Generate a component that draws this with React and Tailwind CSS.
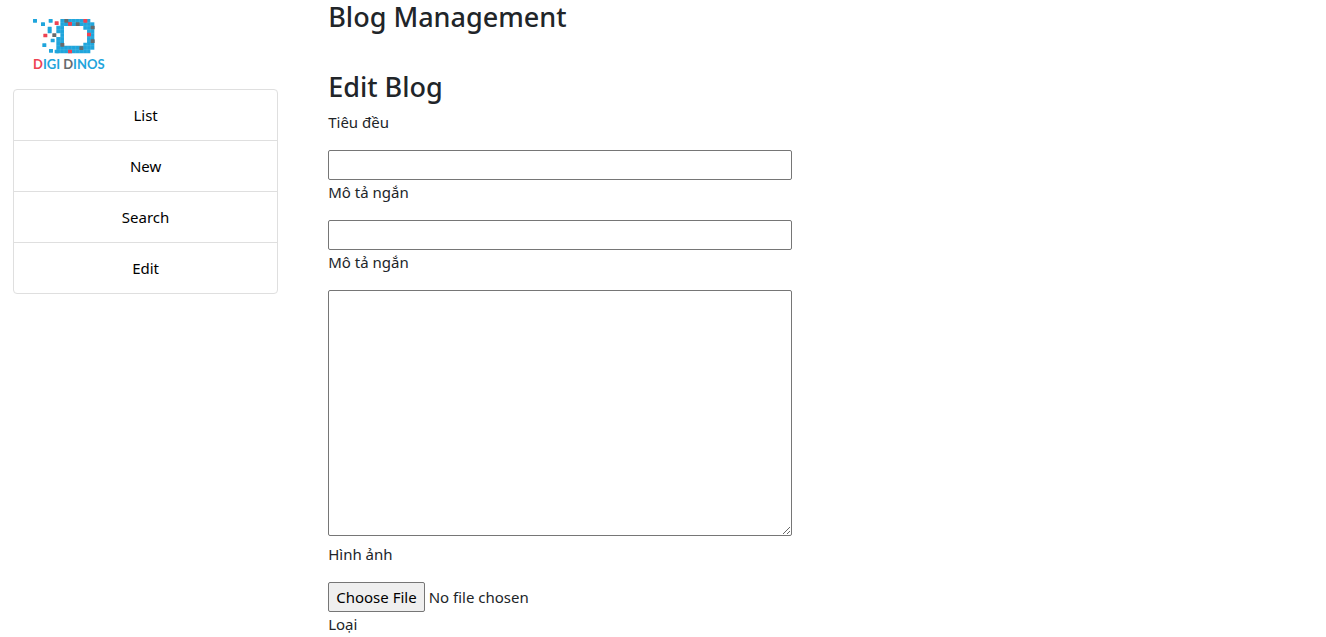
const BLUE = '#1fa5dc';
const RED = '#ee4352';
const GRAY = '#666a6d';

const scattered = [
  [39, 33], [63, 43], [86, 33], [83, 56], [83, 65], [92, 92], [67, 106], [87, 123], [104, 125],
];
const redCells = [[144, 42], [104, 40], [201, 74], [70, 77], [144, 125], [190, 33]];
const grayCells = [[133, 33], [167, 43], [212, 53], [212, 94], [178, 115], [121, 105], [97, 76]];

function Cells({ cells, fill }) {
  return cells.map(([x, y]) => (
    <rect key={`${x}-${y}`} x={x} y={y} width="12" height="11" rx="1" fill={fill} />
  ));
}

function Logo() {
  return (
    <svg className="ml-[7px] block h-[70px] w-[100px]" viewBox="0 0 100 70" role="img" aria-label="Digi Dinos">
      <g transform="scale(0.33333)">
        <path
          fill={BLUE}
          fillRule="evenodd"
          d="M121 33H211V43H223V125H211V136H109V87H121V76H109V53H121ZM132 54V113H190V104H201V65H190V54Z"
        />
        <path
          stroke="#ffffff"
          strokeOpacity="0.2"
          strokeWidth="1.5"
          fill="none"
          d="M121 33V136M132 33V54M132 113V136M144 33V54M144 113V136M155 33V54M155 113V136M167 33V54M167 113V136M178 33V54M178 113V136M190 33V54M190 113V136M201 33V136M212 43V125M109 43H223M109 54H132M190 54H223M109 65H132M201 65H223M109 76H132M201 76H223M109 87H132M201 87H223M109 99H132M201 99H223M109 113H132M190 113H223M109 125H223"
        />
        <Cells cells={scattered} fill={BLUE} />
        <Cells cells={redCells} fill={RED} />
        <Cells cells={grayCells} fill={GRAY} />
      </g>
      <text x="13" y="61" fontSize="13" fontWeight="700" fontFamily="Lato, sans-serif" fill={BLUE}>
        <tspan fill={RED}>D</tspan>IGI <tspan fill={GRAY}>D</tspan>INOS
      </text>
    </svg>
  );
}

const links = ['List', 'New', 'Search', 'Edit'];

function Field({ id, label, children }) {
  return (
    <div className="flex flex-col items-start gap-4">
      <label htmlFor={id} className="leading-6">{label}</label>
      {children}
    </div>
  );
}

const box = 'block w-full max-w-[464px] rounded-xs border border-[#767676] bg-white px-1 text-black';

export default function App() {
  return (
    <div className="flex items-start gap-[50px] bg-white pl-[13px] font-['Noto_Sans',sans-serif] text-[15px] text-[#212529]">
      <aside className="w-[20vw] shrink-0 pt-2">
        <Logo />
        <nav className="mt-[11px] divide-y divide-[#dfdfdf] overflow-hidden rounded border border-[#dfdfdf]">
          {links.map((text) => (
            <a key={text} href={`#${text.toLowerCase()}`} className="block py-[13px] text-center leading-6 text-black">
              {text}
            </a>
          ))}
        </nav>
      </aside>
      <main className="min-w-0 flex-1">
        <h1 className="mb-9 text-[27px] leading-[34px] font-medium">Blog Management</h1>
        <h2 className="mb-1.5 text-[27px] leading-[34px] font-medium">Edit Blog</h2>
        <form>
          <Field id="title" label="Tiêu đều">
            <input id="title" type="text" className={`${box} h-[30px]`} />
          </Field>
          <Field id="summary" label="Mô tả ngắn">
            <input id="summary" type="text" className={`${box} h-[30px]`} />
          </Field>
          <Field id="detail" label="Mô tả ngắn">
            <textarea id="detail" className={`${box} mb-1.5 h-[246px]`} />
          </Field>
          <Field id="image" label="Hình ảnh">
            <input
              id="image"
              type="file"
              className="block h-[30px] max-w-full file:mr-1 file:h-[30px] file:rounded-xs file:border file:border-solid file:border-[#767676] file:bg-[#efefef] file:px-[7px] file:text-black"
            />
          </Field>
          <p className="leading-6">Loại</p>
        </form>
      </main>
    </div>
  );
}
